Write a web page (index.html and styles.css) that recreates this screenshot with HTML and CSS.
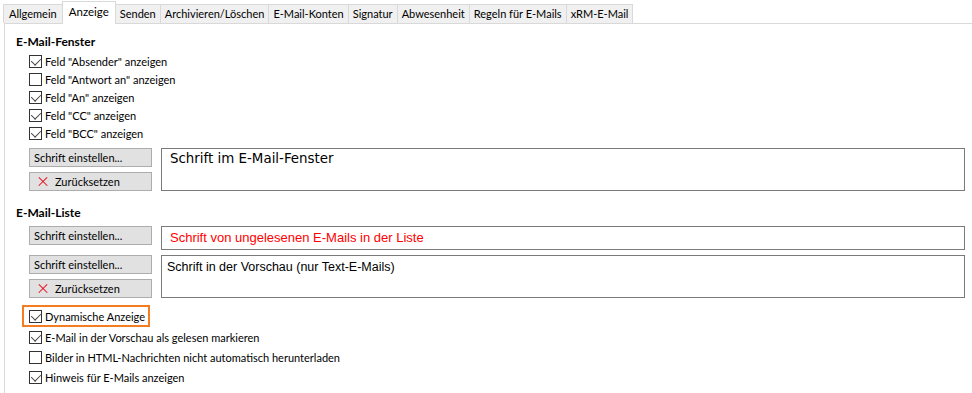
FILE: index.html
```html
<!DOCTYPE html>
<html lang="de">
<head>
    <meta charset="UTF-8">
    <title>Optionen - Anzeige</title>
    <link rel="stylesheet" href="styles.css">
</head>
<body>
    <div class="tabs">
        <div class="tab">Allgemein</div>
        <div class="tab active">Anzeige</div>
        <div class="tab">Senden</div>
        <div class="tab">Archivieren/Löschen</div>
        <div class="tab">E-Mail-Konten</div>
        <div class="tab">Signatur</div>
        <div class="tab">Abwesenheit</div>
        <div class="tab">Regeln für E-Mails</div>
        <div class="tab">xRM-E-Mail</div>
    </div>

    <div class="panel">
        <h2 class="group-title">E-Mail-Fenster</h2>
        <div class="checks">
            <label class="check"><span class="box checked"></span>Feld "Absender" anzeigen</label>
            <label class="check"><span class="box"></span>Feld "Antwort an" anzeigen</label>
            <label class="check"><span class="box checked"></span>Feld "An" anzeigen</label>
            <label class="check"><span class="box checked"></span>Feld "CC" anzeigen</label>
            <label class="check"><span class="box checked"></span>Feld "BCC" anzeigen</label>
        </div>

        <div class="font-row first">
            <div class="buttons">
                <button class="btn">Schrift einstellen...</button>
                <button class="btn"><span class="x-icon"></span>Zurücksetzen</button>
            </div>
            <div class="preview tall verdana">Schrift im E-Mail-Fenster</div>
        </div>

        <h2 class="group-title list-title">E-Mail-Liste</h2>
        <div class="font-row">
            <div class="buttons">
                <button class="btn">Schrift einstellen...</button>
            </div>
            <div class="preview short unread">Schrift von ungelesenen E-Mails in der Liste</div>
        </div>
        <div class="font-row">
            <div class="buttons">
                <button class="btn">Schrift einstellen...</button>
                <button class="btn"><span class="x-icon"></span>Zurücksetzen</button>
            </div>
            <div class="preview tall arial">Schrift in der Vorschau (nur Text-E-Mails)</div>
        </div>

        <div class="options">
            <div class="highlight">
                <label class="check"><span class="box checked"></span>Dynamische Anzeige</label>
            </div>
            <label class="check wide"><span class="box checked"></span>E-Mail in der Vorschau als gelesen markieren</label>
            <label class="check wide"><span class="box"></span>Bilder in HTML-Nachrichten nicht automatisch herunterladen</label>
            <label class="check wide"><span class="box checked"></span>Hinweis für E-Mails anzeigen</label>
        </div>
    </div>
</body>
</html>
```

FILE: styles.css
```css
body {
    margin: 0;
    background-color: #fff;
    font-family: 'Lato', 'Liberation Sans', sans-serif;
    font-size: 11px;
    color: #000;
    width: 972px;
    height: 393px;
    overflow: hidden;
}

/* Reiter */
.tabs {
    display: flex;
    align-items: flex-end;
    padding: 2px 0 0 3px;
    height: 21px;
    position: relative;
    z-index: 1;
}

.tab {
    height: 18px;
    line-height: 18px;
    padding: 0 4px;
    background-color: #f0f0f0;
    border: 1px solid #d9d9d9;
    border-left: none;
    border-bottom: none;
    white-space: nowrap;
}

.tab:first-child {
    border-left: 1px solid #d9d9d9;
    padding: 0 5px;
}

.tab.active {
    height: 22px;
    line-height: 20px;
    background-color: #fff;
    border-left: 1px solid #d9d9d9;
    margin-left: -1px;
    margin-bottom: -1px;
    padding: 0 6px;
    font-size: 11.5px;
}

.tab.active + .tab {
    border-left: none;
}

.panel {
    box-sizing: border-box;
    margin-left: 4px;
    border-top: 1px solid #d9d9d9;
    border-left: 1px solid #d9d9d9;
    padding: 9px 0 0 11px;
    height: 370px;
}

.group-title {
    margin: 0 0 1px;
    font-size: 12px;
    font-weight: bold;
    line-height: 18px;
}

.list-title {
    margin: 13px 0 4px;
}

/* Kontrollkästchen */
.checks {
    display: flex;
    flex-direction: column;
    padding-left: 13px;
}

.check {
    display: flex;
    align-items: center;
    height: 18px;
    white-space: nowrap;
}

.box {
    width: 11px;
    height: 11px;
    border: 1px solid #333;
    background-color: #fff;
    margin-right: 3px;
    flex-shrink: 0;
    position: relative;
}

.box.checked::after {
    content: "";
    position: absolute;
    left: 1px;
    top: 0px;
    width: 8px;
    height: 5px;
    border-left: 1.3px solid #444;
    border-bottom: 1.3px solid #444;
    transform: translate(0.5px, 1.5px) rotate(-45deg) scaleX(0.95);
    transform-origin: center;
}

/* Schriftauswahl */
.font-row {
    display: flex;
    gap: 9px;
    padding-left: 13px;
    margin-bottom: 5px;
}

.font-row.first {
    margin-top: 6px;
}

.buttons {
    display: flex;
    flex-direction: column;
    gap: 5px;
}

.btn {
    width: 123px;
    height: 19px;
    padding: 0 0 0 4px;
    font-family: inherit;
    font-size: 11px;
    text-align: left;
    background-color: #e1e1e1;
    border: 1px solid #adadad;
    display: flex;
    align-items: center;
    color: #000;
}

.x-icon {
    width: 10px;
    height: 10px;
    margin: 0 7px 0 4px;
    position: relative;
}

.x-icon::before,
.x-icon::after {
    content: "";
    position: absolute;
    left: -1px;
    top: 4px;
    width: 12px;
    height: 1.2px;
    background-color: #e81123;
    transform: rotate(45deg);
}

.x-icon::after {
    transform: rotate(-45deg);
}

.preview {
    width: 794px;
    border: 1px solid #7a7a7a;
    background-color: #fff;
    padding: 0 0 0 8px;
    white-space: nowrap;
}

.preview.tall {
    height: 41px;
}

.preview.short {
    height: 22px;
    margin-top: 0;
}

.verdana {
    font-family: 'DejaVu Sans', Verdana, sans-serif;
    font-size: 13.4px;
    line-height: 19px;
}

.unread {
    font-family: 'Liberation Sans', Arial, sans-serif;
    font-size: 13px;
    color: #ff0000;
    line-height: 22px;
}

.arial {
    font-family: 'Liberation Sans', Arial, sans-serif;
    font-size: 12.5px;
    line-height: 22px;
    padding-left: 5px;
    width: 797px;
}

/* Weitere Optionen */
.options {
    display: flex;
    flex-direction: column;
    align-items: flex-start;
    margin-top: 7px;
    margin-left: 6px;
}

.highlight {
    border: 2px solid #f57c1f;
    padding: 0 3px 0 5px;
}

.check.wide {
    height: 20px;
    padding-left: 7px;
}
```
